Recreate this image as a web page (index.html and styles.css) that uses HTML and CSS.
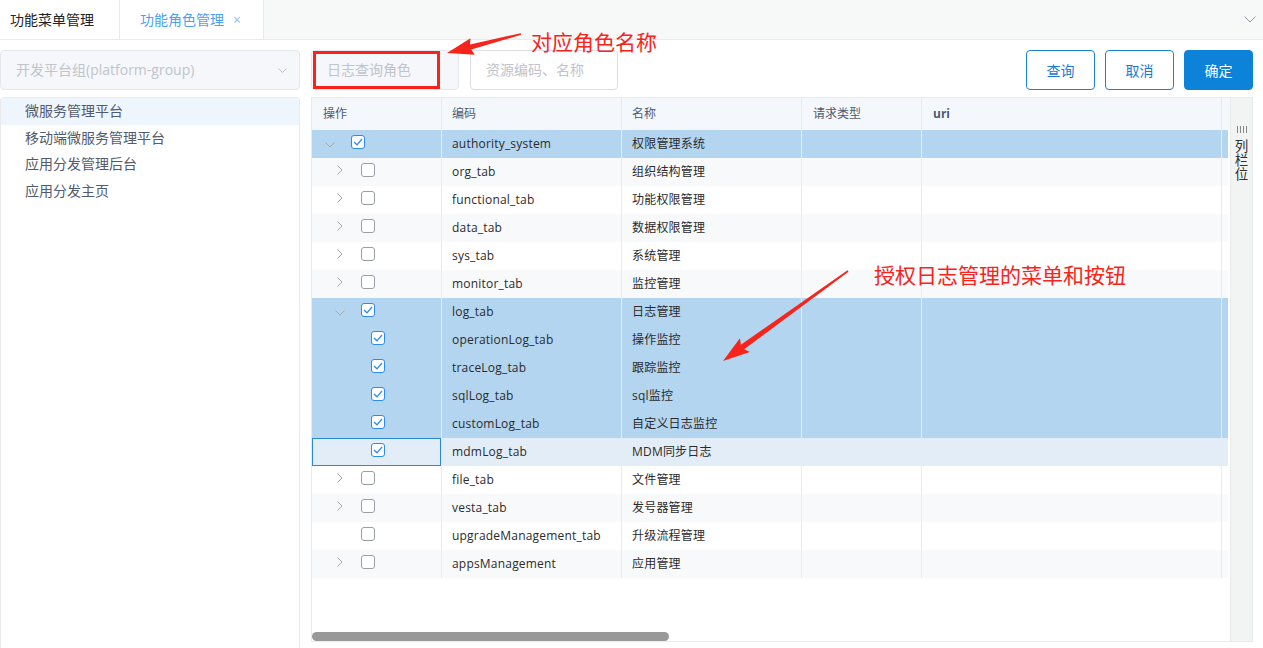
FILE: index.html
```html
<!DOCTYPE html>
<html lang="zh-CN">
<head>
<meta charset="utf-8">
<title>功能角色管理</title>
<link rel="stylesheet" href="styles.css">
</head>
<body>
<div class="tabbar">
  <div class="tab">功能菜单管理</div>
  <div class="tab active">功能角色管理<span class="close">×</span></div>
  <div class="tab-fill">
    <svg class="tab-more" width="12" height="7" viewBox="0 0 12 7"><polyline points="0.5,0.5 6,6 11.5,0.5" fill="none" stroke="#8a98ad" stroke-width="1"/></svg>
  </div>
</div>

<div class="toolbar">
  <div class="filters">
    <div class="select"><span>开发平台组(platform-group)</span>
      <svg width="9" height="5" viewBox="0 0 9 5"><polyline points="0.5,0.5 4.5,4.5 8.5,0.5" fill="none" stroke="#c0c4cc" stroke-width="1"/></svg>
    </div>
    <div class="input disabled">日志查询角色</div>
    <div class="input">资源编码、名称</div>
  </div>
  <div class="actions">
    <button class="btn">查询</button>
    <button class="btn">取消</button>
    <button class="btn primary">确定</button>
  </div>
</div>

<div class="main">
  <div class="side">
    <div class="side-item active">微服务管理平台</div>
    <div class="side-item">移动端微服务管理平台</div>
    <div class="side-item">应用分发管理后台</div>
    <div class="side-item">应用分发主页</div>
  </div>

  <div class="grid-box">
    <div class="grid-area">
      <div class="grid-head">
        <div class="hc">操作</div>
        <div class="hc">编码</div>
        <div class="hc">名称</div>
        <div class="hc">请求类型</div>
        <div class="hc"><b>uri</b></div>
        <div class="hc"></div>
      </div>
      <div class="grid-body" id="body"></div>
      <div class="grid-fill"></div>
      <div class="hscroll"><div class="thumb"></div></div>
    </div>
    <div class="colpanel">
      <div class="bars"><i></i><i></i><i></i><i></i></div>
      <div class="vtext">列栏位</div>
    </div>
  </div>
</div>

<div class="red-box"></div>
<div class="anno-text anno-1">对应角色名称</div>
<div class="anno-text anno-2">授权日志管理的菜单和按钮</div>
<svg class="anno-svg" width="1263" height="648" viewBox="0 0 1263 648">
  <g transform="translate(521 34) rotate(165.6)" fill="#f7241c">
    <polygon points="0,-0.8 52,-2.6 50,-8.5 76.4,0 50,8.5 52,2.6 0,0.8"/>
  </g>
  <g transform="translate(848 271) rotate(144.25)" fill="#f7241c">
    <polygon points="0,-0.8 130,-2.8 127,-8.5 154,0 127,8.5 130,2.8 0,0.8"/>
  </g>
</svg>

<script src="app.js"></script>
</body>
</html>
```

FILE: app.js
```js
var rows = [
  ["authority_system", "权限管理系统", 0, "down", true, "sel"],
  ["org_tab", "组织结构管理", 1, "right", false, ""],
  ["functional_tab", "功能权限管理", 1, "right", false, ""],
  ["data_tab", "数据权限管理", 1, "right", false, ""],
  ["sys_tab", "系统管理", 1, "right", false, ""],
  ["monitor_tab", "监控管理", 1, "right", false, ""],
  ["log_tab", "日志管理", 1, "down", true, "sel"],
  ["operationLog_tab", "操作监控", 2, "", true, "sel"],
  ["traceLog_tab", "跟踪监控", 2, "", true, "sel"],
  ["sqlLog_tab", "sql监控", 2, "", true, "sel"],
  ["customLog_tab", "自定义日志监控", 2, "", true, "sel"],
  ["mdmLog_tab", "MDM同步日志", 2, "", true, "cur"],
  ["file_tab", "文件管理", 1, "right", false, ""],
  ["vesta_tab", "发号器管理", 1, "right", false, ""],
  ["upgradeManagement_tab", "升级流程管理", 1, "", false, ""],
  ["appsManagement", "应用管理", 1, "right", false, ""]
];
var down = '<svg width="10" height="6" viewBox="0 0 10 6"><polyline points="0.5,0.5 5,5 9.5,0.5" fill="none" stroke="#a3a8b0" stroke-width="1"/></svg>';
var right = '<svg width="6" height="10" viewBox="0 0 6 10"><polyline points="0.5,0.5 5,5 0.5,9.5" fill="none" stroke="#a3a8b0" stroke-width="1"/></svg>';
var check = '<svg width="10" height="8" viewBox="0 0 10 8"><polyline points="1,4 4,6.8 9,1" fill="none" stroke="#2d8cf0" stroke-width="1.3"/></svg>';
var html = "";
rows.forEach(function (r, i) {
  var cls = "row";
  if (r[5]) cls += " " + r[5];
  else if (i % 2 === 1) cls += " stripe";
  var arrow = r[3] === "down" ? '<span class="arrow dn">' + down + '</span>' :
              r[3] === "right" ? '<span class="arrow rt">' + right + '</span>' :
              '<span class="arrow"></span>';
  var cb = '<span class="cb' + (r[4] ? ' on' : '') + '">' + (r[4] ? check : '') + '</span>';
  html += '<div class="' + cls + '">' +
    '<div class="c op lv' + r[2] + '">' + arrow + cb + '</div>' +
    '<div class="c">' + r[0] + '</div>' +
    '<div class="c">' + r[1] + '</div>' +
    '<div class="c"></div><div class="c"></div><div class="c"></div></div>';
});
document.getElementById("body").innerHTML = html;
```

FILE: styles.css
```css
* { box-sizing: border-box; margin: 0; padding: 0; }
body {
  font-family: "Open Sans", "Noto Sans CJK SC", sans-serif;
  color: #333;
  background: #fff;
  width: 1263px;
  height: 648px;
  overflow: hidden;
  position: relative;
}

/* tabs */
.tabbar {
  display: flex;
  height: 40px;
  background: #f7f8f8;
  border-bottom: 1px solid #e8eaec;
}
.tab {
  background: #fff;
  height: 39px;
  line-height: 39px;
  font-size: 14px;
  color: #222;
  width: 120px;
  padding-left: 10px;
  border-right: 1px solid #e8eaec;
  white-space: nowrap;
}
.tab.active {
  width: 144px;
  padding-left: 20px;
  color: #4b9ff6;
}
.close {
  margin-left: 9px;
  color: #98bdee;
  font-size: 14px;
}
.tab-fill {
  flex: 1;
  display: flex;
  justify-content: flex-end;
  align-items: center;
  padding-right: 7px;
}

/* toolbar */
.toolbar {
  display: flex;
  justify-content: space-between;
  padding: 10px 10px 0 0;
}
.filters, .actions { display: flex; }
.select, .input {
  height: 40px;
  border: 1px solid #e4e7ed;
  border-radius: 4px;
  background: #f5f7fa;
  color: #c0c4cc;
  font-size: 14px;
  line-height: 38px;
  padding: 0 15px;
  white-space: nowrap;
}
.select {
  width: 300px;
  display: flex;
  justify-content: space-between;
  align-items: center;
  padding-right: 12px;
}
.input {
  width: 148px;
  margin-left: 11px;
  background: #fff;
  border-color: #dcdfe6;
}
.input.disabled { background: #f5f7fa; border-color: #e4e7ed; }
.btn {
  width: 69px;
  height: 40px;
  margin-left: 10px;
  border: 1px solid #1a84d6;
  border-radius: 4px;
  background: #fff;
  color: #1a7ad0;
  font-family: "Open Sans", "Noto Sans CJK SC", sans-serif;
  font-size: 14px;
}
.btn.primary { background: #0c82d9; border-color: #0c82d9; color: #fff; }

/* main */
.main {
  display: flex;
  margin-top: 7px;
}
.side {
  width: 300px;
  height: 560px;
  border: 1px solid #e8eaec;
  border-bottom: none;
  border-radius: 4px 4px 0 0;
  margin-right: 11px;
}
.side-item {
  height: 26.5px;
  line-height: 26.5px;
  padding-left: 24px;
  font-size: 14px;
  color: #515a6e;
}
.side-item.active { background: #eef5fd; }

.grid-box {
  width: 942px;
  height: 545px;
  border: 1px solid #e8eaec;
  display: flex;
  background: linear-gradient(#f4f8fc, #f4f8fc) no-repeat 0 0 / 100% 32px;
}
.grid-area {
  width: 916px;
  margin-right: 2px;
  display: flex;
  flex-direction: column;
  background: #fff;
}
.grid-head, .row {
  display: grid;
  grid-template-columns: 130px 180px 180px 120px 300px 6px;
}
.grid-head {
  height: 32px;
  background: #f4f8fc;
}
.hc {
  border-right: 1px solid #e8eaec;
  font-size: 12px;
  color: #515a6e;
  line-height: 32px;
  padding-left: 11px;
}
.hc:nth-child(2), .hc:nth-child(3) { padding-left: 10px; }
.hc:last-child { border-right: none; }
.hc b { font-weight: 700; color: #515a6e; }

.row { height: 28px; }
.row.stripe { background: #f8f9fa; }
.row.sel { background: #b3d5ef; }
.row.cur { background: #e3edf7; }
.row.cur .op { box-shadow: inset 0 0 0 1px #2a88dc; }
.c {
  border-right: 1px solid #e8eaec;
  font-size: 12px;
  letter-spacing: 0.2px;
  color: #2b2b2b;
  line-height: 28px;
  padding-left: 10px;
  white-space: nowrap;
  overflow: hidden;
}
.row.sel .c { border-right-color: #e4edf5; }
.c:last-child { border-right: none; }
.c.op {
  display: flex;
  align-items: center;
  padding-left: 13px;
}
.c.op.lv1 { padding-left: 23px; }
.c.op.lv2 { padding-left: 33px; }
.arrow {
  width: 10px;
  margin-right: 16px;
  display: flex;
  justify-content: center;
}
.arrow svg { display: block; }
.arrow.dn { margin-top: 2px; }
.arrow.rt { margin-bottom: 4px; }
.cb {
  width: 14px;
  height: 14px;
  border: 1px solid #9a9ea5;
  border-radius: 3px;
  background: #fff;
  margin-bottom: 4px;
  display: flex;
  align-items: center;
  justify-content: center;
}
.cb.on { border-color: #2d8cf0; }
.cb svg { display: block; }

.grid-fill { flex: 1; }
.hscroll { height: 9px; }
.thumb {
  width: 357px;
  height: 9px;
  border-radius: 5px;
  background: #999;
}

.colpanel {
  width: 22px;
  border-left: 1px solid #e8eaec;
  background: #f2f3f3;
  display: flex;
  flex-direction: column;
  align-items: center;
}
.bars {
  display: flex;
  gap: 2px;
  margin-top: 28px;
  height: 7px;
}
.bars i {
  display: block;
  width: 1px;
  height: 7px;
  background: #888;
}
.vtext {
  margin-top: 6px;
  writing-mode: vertical-rl;
  text-orientation: upright;
  font-family: "Noto Sans CJK SC", sans-serif;
  font-size: 13.5px;
  letter-spacing: 0.5px;
  line-height: 16px;
  color: #333;
}

/* annotations (drawn over the page) */
.red-box {
  position: absolute;
  left: 313px;
  top: 51px;
  width: 127px;
  height: 38px;
  border: 3px solid #f7241c;
}
.anno-text {
  position: absolute;
  font-family: "Noto Sans CJK SC", sans-serif;
  font-size: 21px;
  line-height: 24px;
  color: #f7241c;
  white-space: nowrap;
}
.anno-1 { left: 531px; top: 29px; }
.anno-2 { left: 874px; top: 262px; }
.anno-svg {
  position: absolute;
  left: 0;
  top: 0;
  pointer-events: none;
}
```
